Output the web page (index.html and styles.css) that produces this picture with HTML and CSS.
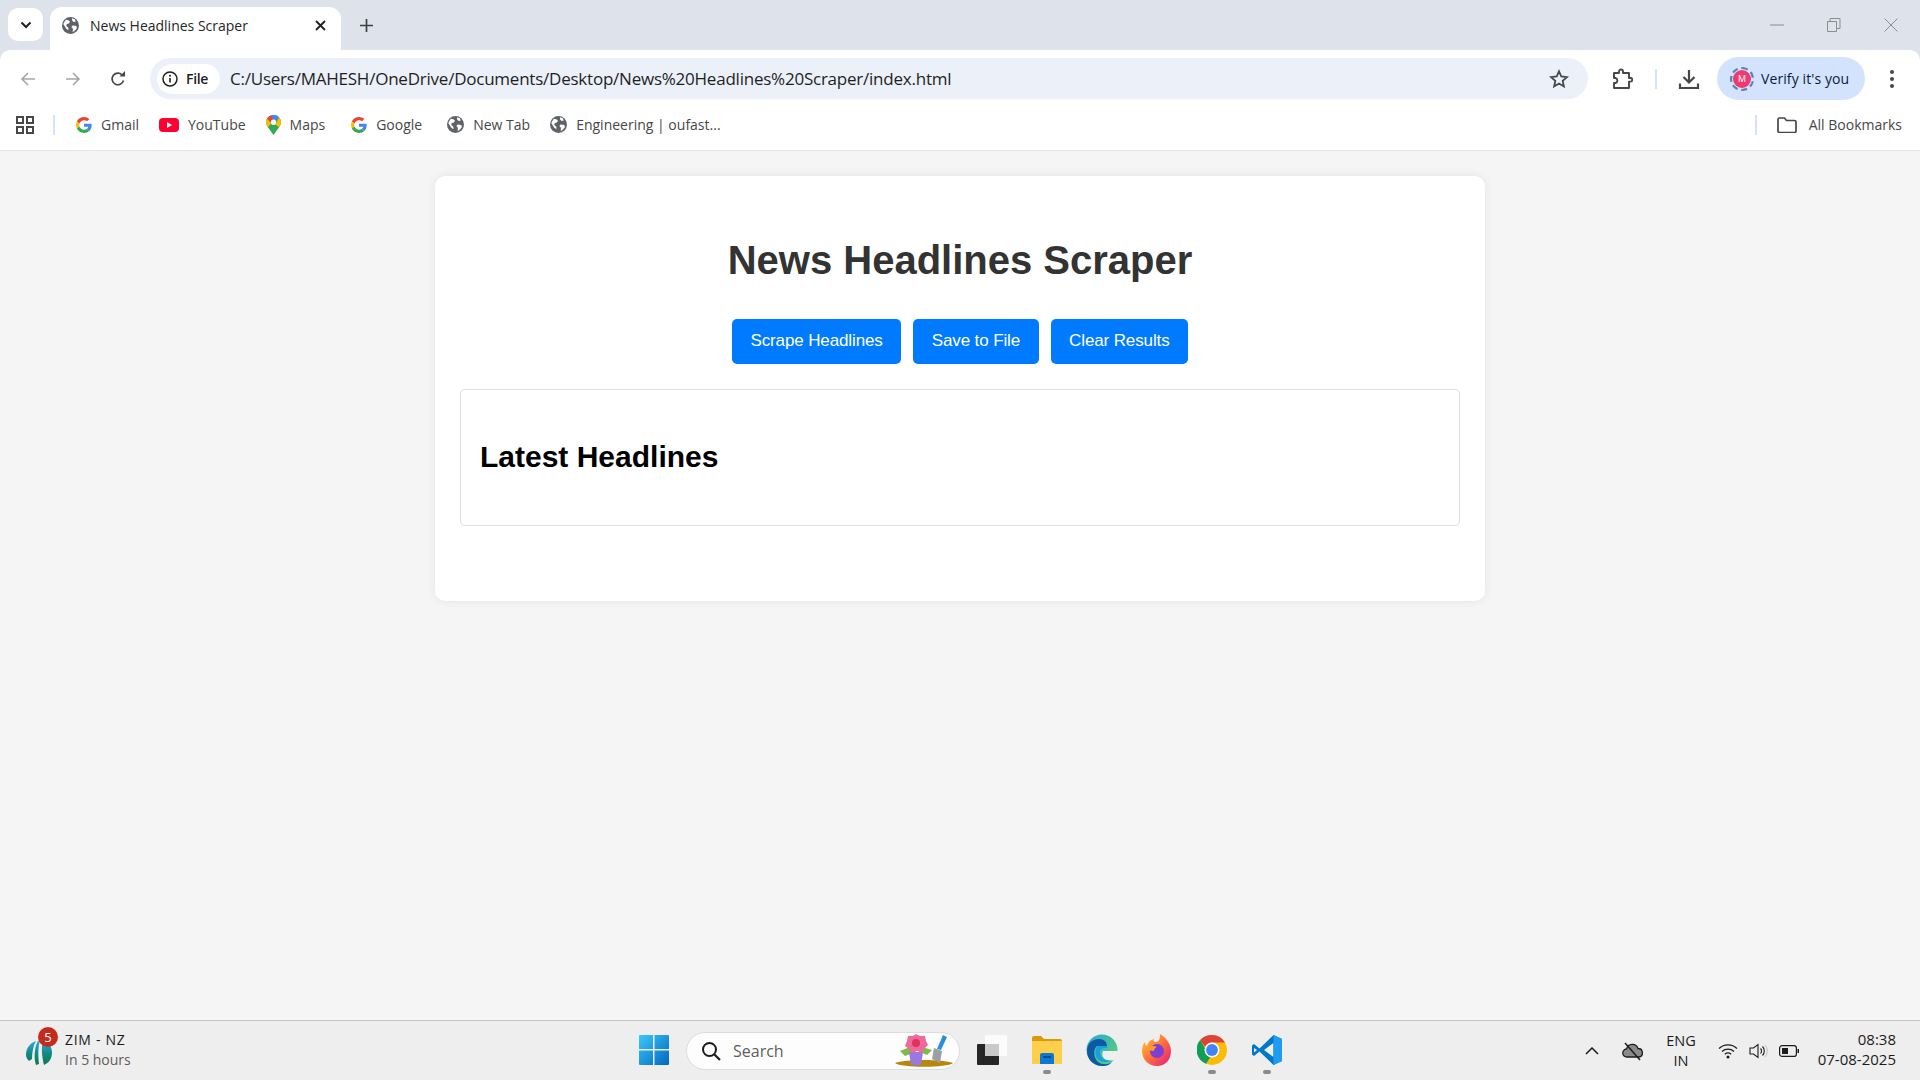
FILE: index.html
```html
<!DOCTYPE html>
<html lang="en">
<head>
    <meta charset="UTF-8">
    <meta name="viewport" content="width=device-width, initial-scale=1.0">
    <title>News Headlines Scraper</title>
    <link rel="stylesheet" href="styles.css">
</head>
<body>
    <svg class="sprites" width="0" height="0">
        <symbol id="globe" viewBox="0 0 16 16">
            <circle cx="8" cy="8" r="8" fill="#5f6368"/>
            <path d="M3.500 2.500l2.500.5 1.500 1.500-1 1.500-2 .5-.5 2 2 1.500v2.500l-2-1.500-2.800-4.500zM9.500 1.200l2.500 1 1 2-2 .5-1.500-1.500zM10 8l3.500.5.500 2-2.500 3-1.500.5.300-3-1.500-1.500z" fill="#fff"/>
        </symbol>
        <symbol id="google" viewBox="0 0 48 48">
            <path fill="#ea4335" d="M24 9.500c3.500 0 6.700 1.200 9.200 3.600l6.900-6.900C35.900 2.400 30.500 0 24 0 14.600 0 6.500 5.400 2.600 13.200l8 6.200C12.400 13.700 17.700 9.500 24 9.500z"/>
            <path fill="#4285f4" d="M47 24.500c0-1.600-.1-3.100-.4-4.500H24v9h12.900c-.6 3-2.200 5.500-4.700 7.200l7.700 6C44.400 38 47 31.800 47 24.500z"/>
            <path fill="#fbbc05" d="M10.500 28.600c-.5-1.400-.8-3-.8-4.600s.3-3.200.8-4.600l-8-6.200C.9 16.500 0 20.100 0 24s.9 7.500 2.600 10.800z"/>
            <path fill="#34a853" d="M24 48c6.500 0 11.900-2.100 15.900-5.800l-7.700-6c-2.200 1.400-4.900 2.300-8.200 2.300-6.300 0-11.600-4.200-13.500-9.900l-8 6.200C6.500 42.600 14.600 48 24 48z"/>
        </symbol>
    </svg>

    <header class="browser">
        <div class="tabstrip">
            <button class="tab-search">
                <svg width="12" height="8" viewBox="0 0 12 8"><path d="M1.500 1.500L6 6l4.500-4.500" fill="none" stroke="#1f1f1f" stroke-width="2"/></svg>
            </button>
            <div class="tab">
                <svg class="tab-icon" width="17" height="17"><use href="#globe"/></svg>
                <span class="tab-title">News Headlines Scraper</span>
                <svg width="11" height="11" viewBox="0 0 11 11"><path d="M1 1l9 9M10 1l-9 9" stroke="#1f1f1f" stroke-width="1.800"/></svg>
            </div>
            <svg class="new-tab" width="13" height="13" viewBox="0 0 13 13"><path d="M6.500 0v13M0 6.500h13" stroke="#3c4043" stroke-width="1.700"/></svg>
            <div class="window-controls">
                <svg width="14" height="14" viewBox="0 0 14 14"><path d="M0 7h14" stroke="#8a8d91"/></svg>
                <svg width="14" height="14" viewBox="0 0 14 14"><path d="M.5 3.500h9v10h-9zM3 3.500V.5h10v10H9.500" fill="none" stroke="#8a8d91"/></svg>
                <svg width="14" height="14" viewBox="0 0 14 14"><path d="M.5.500l13 13M13.500.500l-13 13" stroke="#8a8d91"/></svg>
            </div>
        </div>

        <div class="toolbar">
            <svg class="nav-icon" width="16" height="16" viewBox="0 0 16 16"><path d="M15 8H2M8 2L2 8l6 6" fill="none" stroke="#a4a6a9" stroke-width="1.600"/></svg>
            <svg class="nav-icon" width="16" height="16" viewBox="0 0 16 16"><path d="M1 8h13M8 2l6 6-6 6" fill="none" stroke="#a4a6a9" stroke-width="1.600"/></svg>
            <svg class="nav-icon" width="16" height="16" viewBox="0 0 16 16"><path d="M13.500 9.500A5.800 5.800 0 1 1 12 3.800" fill="none" stroke="#474747" stroke-width="1.700"/><path d="M9.500 5.500H15V0z" fill="#474747"/></svg>

            <div class="omnibox">
                <div class="file-chip">
                    <svg width="16" height="16" viewBox="0 0 16 16"><circle cx="8" cy="8" r="7" fill="none" stroke="#1f1f1f" stroke-width="1.500"/><path d="M8 7v4.500" stroke="#1f1f1f" stroke-width="1.600"/><circle cx="8" cy="4.800" r="1" fill="#1f1f1f"/></svg>
                    <span>File</span>
                </div>
                <span class="url">C:/Users/MAHESH/OneDrive/Documents/Desktop/News%20Headlines%20Scraper/index.html</span>
                <svg width="20" height="20" viewBox="0 0 20 20"><path d="M10 2.300l2.300 5.200 5.700.6-4.300 3.800 1.200 5.600L10 14.600l-4.900 2.900 1.200-5.600L2 8.100l5.700-.6z" fill="none" stroke="#474747" stroke-width="1.800"/></svg>
            </div>

            <svg class="ext-icon" width="22" height="22" viewBox="0 0 22 22"><path d="M3 5h5V3.500a2 2 0 0 1 4 0V5h6v5h1.500a1.800 1.800 0 0 1 0 3.600H18V20H3v-5h1.500a2.600 2.600 0 0 0 0-5H3z" fill="none" stroke="#474747" stroke-width="1.900" stroke-linejoin="round"/></svg>
            <span class="divider"></span>
            <svg class="dl-icon" width="22" height="22" viewBox="0 0 22 22"><path d="M11 2v12M5.500 9l5.500 5.500L16.500 9" fill="none" stroke="#474747" stroke-width="2.200"/><path d="M2 15.500V20h18v-4.500" fill="none" stroke="#474747" stroke-width="2.200"/></svg>
            <div class="verify">
                <span class="avatar">M</span>
                <span>Verify it's you</span>
            </div>
            <svg class="menu-icon" width="4" height="18" viewBox="0 0 4 18"><circle cx="2" cy="2" r="2" fill="#474747"/><circle cx="2" cy="9" r="2" fill="#474747"/><circle cx="2" cy="16" r="2" fill="#474747"/></svg>
        </div>

        <nav class="bookmarks">
            <svg class="apps-icon" width="18" height="18" viewBox="0 0 18 18"><path d="M1 1h6v6H1zM11 1h6v6h-6zM1 11h6v6H1zM11 11h6v6h-6z" fill="none" stroke="#474747" stroke-width="2"/></svg>
            <span class="divider bm-divider"></span>
            <a class="bookmark"><svg width="16" height="16"><use href="#google"/></svg>Gmail</a>
            <a class="bookmark">
                <svg width="20" height="14" viewBox="0 0 20 14"><rect width="20" height="14" rx="4" fill="#ff0033"/><path d="M8 4l5 3-5 3z" fill="#fff"/></svg>YouTube
            </a>
            <a class="bookmark bm-maps">
                <svg width="15" height="20" viewBox="0 0 15 20"><path d="M7.500 0C3.400 0 0 3.200 0 7.300c0 2 .8 3.500 1.900 5L7.500 20l5.600-7.700c1.100-1.500 1.900-3 1.900-5C15 3.200 11.600 0 7.500 0z" fill="#34a853"/><path d="M1 3.500A7.500 7.500 0 0 1 5 .4L7.500 5 5 8z" fill="#ea4335"/><path d="M5 .4A7.500 7.500 0 0 1 13 2.200L10 6 7.500 5z" fill="#4285f4"/><path d="M13 2.200A7.500 7.500 0 0 1 15 7.300c0 2-.8 3.500-1.900 5L9.500 9.500z" fill="#fbbc05"/><path d="M1 3.500A7.500 7.500 0 0 0 0 7.300c0 2 .8 3.500 1.900 5L5 8.500z" fill="#fbbc05"/><circle cx="7.500" cy="7.300" r="2.700" fill="#fff"/></svg>Maps
            </a>
            <a class="bookmark bm-google"><svg width="16" height="16"><use href="#google"/></svg>Google</a>
            <a class="bookmark"><svg width="17" height="17"><use href="#globe"/></svg>New Tab</a>
            <a class="bookmark"><svg width="17" height="17"><use href="#globe"/></svg>Engineering | oufast...</a>
            <span class="divider bm-right-divider"></span>
            <a class="bookmark all-bookmarks">
                <svg width="20" height="16" viewBox="0 0 20 16"><path d="M1 2.500A1.500 1.500 0 0 1 2.500 1h5l2 2.500h8A1.500 1.500 0 0 1 19 5v9a1.500 1.500 0 0 1-1.500 1.500h-15A1.500 1.500 0 0 1 1 14z" fill="none" stroke="#474747" stroke-width="1.700"/></svg>All Bookmarks
            </a>
        </nav>
    </header>

    <main class="page">
        <div class="container">
            <h1>News Headlines Scraper</h1>
            <div class="actions">
                <button class="btn">Scrape Headlines</button>
                <button class="btn">Save to File</button>
                <button class="btn">Clear Results</button>
            </div>
            <div class="results">
                <h2>Latest Headlines</h2>
            </div>
        </div>
    </main>

    <footer class="taskbar">
        <div class="widget">
            <div class="widget-logo">
                <svg width="28" height="32" viewBox="0 0 28 32">
                    <defs><linearGradient id="icc" x1="0" y1="0" x2="0" y2="1"><stop offset="0" stop-color="#2fa8e0"/><stop offset=".55" stop-color="#12887f"/><stop offset="1" stop-color="#0a7a50"/></linearGradient></defs>
                    <path d="M1 19C1 12 5 7 11 5c-3 5-4 12-4 18l-3 2c-2-2-3-4-3-6zM13 5h2c-2 6-2 14-1 23l-3 1c-2-6-2-17 2-24zM18 5c6 1 9 6 9 12 0 5-3 10-8 12-2-8-3-17-1-24z" fill="url(#icc)"/>
                </svg>
                <span class="widget-badge">5</span>
            </div>
            <div class="widget-text">
                <span class="widget-title">ZIM - NZ</span>
                <span class="widget-sub">In 5 hours</span>
            </div>
        </div>

        <div class="task-center">
            <svg class="win-logo" width="30" height="30" viewBox="0 0 30 30">
                <defs><linearGradient id="win" x1="0" y1="0" x2="1" y2="1"><stop offset="0" stop-color="#3dc8f8"/><stop offset="1" stop-color="#0067c0"/></linearGradient></defs>
                <path d="M0 1a1 1 0 0 1 1-1h13v14H0zM15.500 0H29a1 1 0 0 1 1 1v13H15.500zM0 15.500h14V30H1a1 1 0 0 1-1-1zM15.500 15.500H30V29a1 1 0 0 1-1 1H15.500z" fill="url(#win)"/>
            </svg>
            <div class="searchbox">
                <svg width="20" height="20" viewBox="0 0 20 20"><circle cx="8.500" cy="8.500" r="6.500" fill="none" stroke="#1c1c1c" stroke-width="2"/><path d="M13 13l6 6" stroke="#1c1c1c" stroke-width="2.200"/></svg>
                <span class="search-label">Search</span>
                <svg class="search-art" width="60" height="36" viewBox="0 0 60 36">
                    <path d="M1 31c10-4 48-4 58 0-6 5-52 5-58 0z" fill="#b8860b"/>
                    <path d="M16 15l-10 4 5 5 8-3zM28 15l10 3-5 5-7-3z" fill="#7dbb45"/>
                    <path d="M15 20h14l-2 13H17z" fill="#9a78e0"/>
                    <path d="M22 2l4 2 5 0 1 5 2 4-4 4-2 4-5-2-5 2-3-4-4-3 2-5 1-5 5 0z" fill="#ee6a9a"/>
                    <circle cx="22" cy="11" r="4" fill="#e2305f"/>
                    <path d="M49 3l4 2-6 13-4-1z" fill="#2b8fe0"/>
                    <path d="M40 16l8 3-2 12-8-4z" fill="#9aa0a6"/>
                </svg>
            </div>
            <svg class="task-icon" width="30" height="30" viewBox="0 0 30 30">
                <rect x="0" y="9" width="22" height="21" rx="1" fill="#262626"/>
                <rect x="8" y="0" width="22" height="21" rx="1" fill="#fff" fill-opacity=".75"/>
                <rect x="8" y="9" width="14" height="12" fill="#c9c9c9"/>
            </svg>
            <div class="task-app running">
                <svg width="30" height="28" viewBox="0 0 30 28">
                    <path d="M0 2a2 2 0 0 1 2-2h7l3 3h16a2 2 0 0 1 2 2v4H0z" fill="#d99a0c"/>
                    <path d="M0 5h30v23H0z" fill="#fdcf4a"/>
                    <path d="M8 19a2 2 0 0 1 2-2h10a2 2 0 0 1 2 2v9H8z" fill="#0f78d4"/>
                    <path d="M11 21h8" stroke="#073f78" stroke-width="1.500"/>
                </svg>
            </div>
            <div class="task-app">
                <svg width="32" height="32" viewBox="0 0 32 32">
                    <defs><linearGradient id="edge" x1="0" y1="0" x2="1" y2="1"><stop offset="0" stop-color="#2aa6d8"/><stop offset="1" stop-color="#5fd66d"/></linearGradient></defs>
                    <circle cx="16" cy="16" r="15.500" fill="url(#edge)"/>
                    <path d="M1 17C1 9 7 5 13 5c6 0 8 4 8 7H12C8 12 6 22 12 28c4 3 10 3 14 0-3 4-7 4-10 4C7 32 1 25 1 17z" fill="#0c59a4"/>
                    <path d="M12 12c-5 6-2 16 7 16 4 0 7-1 9-3-4 1-13 3-14-6-.4-3 2-5 7-5v-2z" fill="#1b9de2"/>
                    <path d="M17 17h15c0 3-1 7-4 9-3 1-9 1-11-3-1-2-1-4 0-6z" fill="#eef0ef"/>
                </svg>
            </div>
            <div class="task-app">
                <svg width="30" height="32" viewBox="0 0 30 32">
                    <defs><linearGradient id="fox" x1="0" y1="0" x2="1" y2="1"><stop offset="0" stop-color="#ffd234"/><stop offset=".5" stop-color="#ff7139"/><stop offset="1" stop-color="#e31587"/></linearGradient></defs>
                    <path d="M15 32C6 32 0 25 0 17c0-4 1-7 3-9 0 2 1 3 2 4 1-4 3-6 7-7-1 2 0 3 2 3 3 0 4-3 4-8 5 3 11 9 11 17 0 9-6 15-14 15z" fill="url(#fox)"/>
                    <circle cx="15" cy="17" r="7" fill="#7b3fd4"/>
                    <path d="M4 14c3-2 8-3 11-1-2 1-3 2-3 4-3 0-6-1-8-3z" fill="#ff9a2e"/>
                </svg>
            </div>
            <div class="task-app running">
                <svg width="30" height="30" viewBox="0 0 48 48">
                    <circle cx="24" cy="24" r="24" fill="#fbbc05"/>
                    <path d="M24 0a24 24 0 0 1 20.800 12H24a12 12 0 0 0-11 7L5 8A24 24 0 0 1 24 0z" fill="#db4437"/>
                    <path d="M5 8l9 15.500A12 12 0 0 0 21 35.500L14.500 46A24 24 0 0 1 5 8z" fill="#0f9d58"/>
                    <circle cx="24" cy="24" r="12" fill="#fff"/>
                    <circle cx="24" cy="24" r="9.500" fill="#4285f4"/>
                </svg>
            </div>
            <div class="task-app running">
                <svg width="30" height="30" viewBox="0 0 30 30">
                    <path d="M21.500 0L30 4v22l-8.500 4-14-13.500L2 21l-2-1.500v-9L2 9l5.500 4.500z" fill="#0078c8"/>
                    <path d="M21.500 8L12 15l9.500 7z" fill="#eeeeee"/>
                    <path d="M21.500 0L30 4v22l-8.500 4z" fill="#1f9cf0"/>
                    <path d="M2 13l3 2-3 2.500z" fill="#eeeeee"/>
                </svg>
            </div>
        </div>

        <div class="tray">
            <svg class="tray-chevron" width="14" height="8" viewBox="0 0 14 8"><path d="M1 7l6-6 6 6" fill="none" stroke="#1c1c1c" stroke-width="1.500"/></svg>
            <svg class="tray-cloud" width="22" height="20" viewBox="0 0 22 20"><path d="M5 16a4 4 0 0 1-.5-8A6 6 0 0 1 16 7.500 4.300 4.300 0 0 1 17 16z" fill="#8a8a8a" stroke="#1c1c1c" stroke-width="1.300"/><path d="M3 2l15 17" stroke="#1c1c1c" stroke-width="1.500"/></svg>
            <div class="tray-lang"><span>ENG</span><span>IN</span></div>
            <svg class="tray-wifi" width="20" height="16" viewBox="0 0 20 16"><path d="M1 5.500a13 13 0 0 1 18 0M4 8.500a9 9 0 0 1 12 0M6.800 11.300a5 5 0 0 1 6.400 0" fill="none" stroke="#1c1c1c" stroke-width="1.200"/><circle cx="10" cy="14" r="1.500" fill="#1c1c1c"/></svg>
            <svg class="tray-sound" width="19" height="16" viewBox="0 0 19 16"><path d="M1 5h3.500L9 1.500v13L4.500 11H1z" fill="none" stroke="#1c1c1c" stroke-width="1.100"/><path d="M11.500 5.500a3.500 3.500 0 0 1 0 5M13.500 3.500a6.500 6.500 0 0 1 0 9" fill="none" stroke="#1c1c1c" stroke-width="1.100"/><path d="M16 2a9 9 0 0 1 0 12" fill="none" stroke="#c4c4c4" stroke-width="1.100"/></svg>
            <svg class="tray-battery" width="20" height="12" viewBox="0 0 20 12"><rect x=".6" y=".6" width="16.800" height="10.800" rx="2.500" fill="none" stroke="#1c1c1c" stroke-width="1.200"/><rect x="3" y="3" width="6" height="6" fill="#1c1c1c"/><path d="M18.500 4h1.500v4h-1.500z" fill="#1c1c1c"/></svg>
            <div class="tray-clock"><span>08:38</span><span>07-08-2025</span></div>
        </div>
    </footer>
</body>
</html>
```

FILE: styles.css
```css
* {
    box-sizing: border-box;
}
body {
    margin: 0;
    height: 1080px;
    overflow: hidden;
    display: flex;
    flex-direction: column;
    background: #f5f5f5;
    font-family: "Open Sans", "Noto Sans", sans-serif;
    color: #1f1f1f;
}
svg {
    flex: none;
    display: block;
}
.sprites {
    position: absolute;
}

/* browser chrome */
.browser {
    height: 151px;
    flex: none;
    background: #dee3eb;
}
.tabstrip {
    height: 50px;
    display: flex;
    align-items: flex-end;
}
.tab-search {
    width: 35px;
    height: 33px;
    margin: 0 7px 9px 8px;
    border: 0;
    border-radius: 10px;
    background: #fff;
    display: flex;
    align-items: center;
    justify-content: center;
}
.tab {
    width: 291px;
    height: 43px;
    padding: 0 15px 6px 12px;
    background: #fff;
    border-radius: 12px 12px 0 0;
    display: flex;
    align-items: center;
}
.tab-title {
    flex: 1;
    margin-left: 11px;
    font-size: 14px;
    color: #262626;
}
.new-tab {
    margin: 0 0 18px 19px;
}
.window-controls {
    margin-left: auto;
    margin-right: 22px;
    margin-bottom: 18px;
    display: flex;
    gap: 43px;
}
.toolbar {
    height: 57px;
    background: #fff;
    border-radius: 10px 10px 0 0;
    padding-left: 20px;
    display: flex;
    align-items: center;
}
.nav-icon {
    margin-right: 29px;
}
.nav-icon:nth-child(3) {
    margin-right: 24px;
}
.omnibox {
    width: 1438px;
    height: 41px;
    padding: 0 19px 0 7px;
    border-radius: 21px;
    background: #ebf0f9;
    display: flex;
    align-items: center;
}
.file-chip {
    width: 63px;
    height: 30px;
    padding-left: 5px;
    border-radius: 15px;
    background: #fff;
    display: flex;
    align-items: center;
    gap: 8px;
    font-size: 14px;
    font-weight: 600;
    letter-spacing: -0.3px;
}
.url {
    flex: 1;
    margin-left: 10px;
    font-size: 17px;
    letter-spacing: -0.23px;
    color: #1f1f1f;
}
.ext-icon {
    margin-left: 23px;
}
.divider {
    width: 2px;
    height: 20px;
    background: #d3e3fd;
    flex: none;
}
.toolbar .divider {
    margin: 0 21px 0 22px;
}
.verify {
    width: 148px;
    height: 43px;
    margin-left: 17px;
    padding-left: 13px;
    border-radius: 22px;
    background: #d3e3fd;
    display: flex;
    align-items: center;
    gap: 7px;
    font-size: 14px;
    letter-spacing: 0.1px;
    color: #0b1c40;
}
.avatar {
    width: 24px;
    height: 24px;
    border-radius: 50%;
    border: 2px dashed #5f7fb5;
    background: #ee3a70;
    background-clip: content-box;
    padding: 1px;
    color: #fff;
    font-size: 9px;
    line-height: 18px;
    text-align: center;
    flex: none;
}
.menu-icon {
    margin-left: 25px;
}
.bookmarks {
    height: 44px;
    background: #fff;
    border-bottom: 1px solid #e3e3e3;
    padding: 0 18px 8px 16px;
    display: flex;
    align-items: center;
    font-size: 14px;
    color: #474747;
}
.bm-divider {
    margin: 0 21px 0 19px;
}
.bookmark {
    display: flex;
    align-items: center;
    gap: 9px;
    margin-right: 20px;
}
.bm-maps {
    margin-right: 26px;
}
.bm-google {
    margin-right: 25px;
}
.bm-right-divider {
    margin-left: auto;
    margin-right: 20px;
}
.all-bookmarks {
    margin-right: 0;
    gap: 12px;
}

/* page */
.page {
    flex: 1;
    padding-top: 25px;
    background: #f5f5f5;
}
.container {
    width: 1050px;
    height: 425px;
    margin: 0 auto;
    padding: 0 25px;
    background: #fff;
    border-radius: 10px;
    box-shadow: 0 0 10px rgba(0, 0, 0, 0.08);
    font-family: "Liberation Sans", Arial, sans-serif;
}
h1 {
    margin: 0;
    padding-top: 60px;
    text-align: center;
    font-size: 40px;
    line-height: 48px;
    color: #333;
}
.actions {
    display: flex;
    justify-content: center;
    gap: 12px;
    margin-top: 35px;
}
.btn {
    height: 45px;
    padding: 0 18.500px 2px;
    border: 0;
    border-radius: 5px;
    background: #007bff;
    color: #fff;
    font-family: inherit;
    font-size: 17px;
    letter-spacing: -0.12px;
}
.results {
    height: 137px;
    margin-top: 25px;
    padding: 0 19px 2px;
    border: 1px solid #ddd;
    border-radius: 5px;
    display: flex;
    align-items: center;
}
h2 {
    margin: 0;
    font-size: 30px;
    color: #000;
}

/* windows taskbar */
.taskbar {
    height: 60px;
    flex: none;
    position: relative;
    background: #eeeeee;
    border-top: 1px solid #c6c6c6;
    display: flex;
    align-items: center;
    color: #1c1c1c;
}
.widget {
    width: 420px;
    padding-left: 25px;
    display: flex;
    align-items: center;
    gap: 12px;
}
.widget-logo {
    position: relative;
    margin-top: 2px;
}
.widget-badge {
    position: absolute;
    top: -9px;
    left: 13px;
    width: 20px;
    height: 20px;
    border-radius: 50%;
    background: #c42b1c;
    color: #fff;
    font-size: 13px;
    line-height: 20px;
    text-align: center;
}
.widget-text {
    display: flex;
    flex-direction: column;
    margin-top: -2px;
    font-size: 14px;
    line-height: 20px;
}
.widget-title {
    letter-spacing: 0.7px;
}
.widget-sub {
    color: #5d5d5d;
}
.task-center {
    position: absolute;
    left: 639px;
    top: 0;
    height: 58px;
    display: flex;
    align-items: center;
}
.win-logo {
    margin-right: 17px;
}
.searchbox {
    width: 274px;
    height: 38px;
    margin-top: 1px;
    padding-left: 14px;
    margin-right: 17px;
    border: 1px solid #dcdcdc;
    border-radius: 19px;
    background: #fdfdfd;
    display: flex;
    align-items: center;
    position: relative;
    font-size: 16px;
    color: #5d5d5d;
}
.search-label {
    margin-left: 12px;
}
.search-art {
    position: absolute;
    right: 5px;
    top: -1px;
}
.task-icon {
    margin-right: 12px;
}
.task-app {
    width: 55px;
    height: 58px;
    display: flex;
    align-items: center;
    justify-content: center;
    position: relative;
}
.running::after {
    content: "";
    position: absolute;
    bottom: 5px;
    left: 24px;
    width: 8px;
    height: 4px;
    border-radius: 2px;
    background: #8a8a8a;
}
.tray {
    margin-left: auto;
    padding-right: 24px;
    display: flex;
    align-items: center;
    font-size: 14px;
}
.tray-chevron {
    margin-right: 23px;
}
.tray-cloud {
    margin-right: 22px;
}
.tray-lang {
    display: flex;
    flex-direction: column;
    align-items: center;
    line-height: 20px;
    margin-right: 22px;
    font-size: 14.500px;
}
.tray-wifi {
    margin-right: 11px;
}
.tray-sound {
    margin-right: 11px;
}
.tray-battery {
    margin-right: 19px;
}
.tray-clock {
    display: flex;
    flex-direction: column;
    align-items: flex-end;
    line-height: 20px;
    margin-top: -4px;
    font-size: 15px;
}
```
